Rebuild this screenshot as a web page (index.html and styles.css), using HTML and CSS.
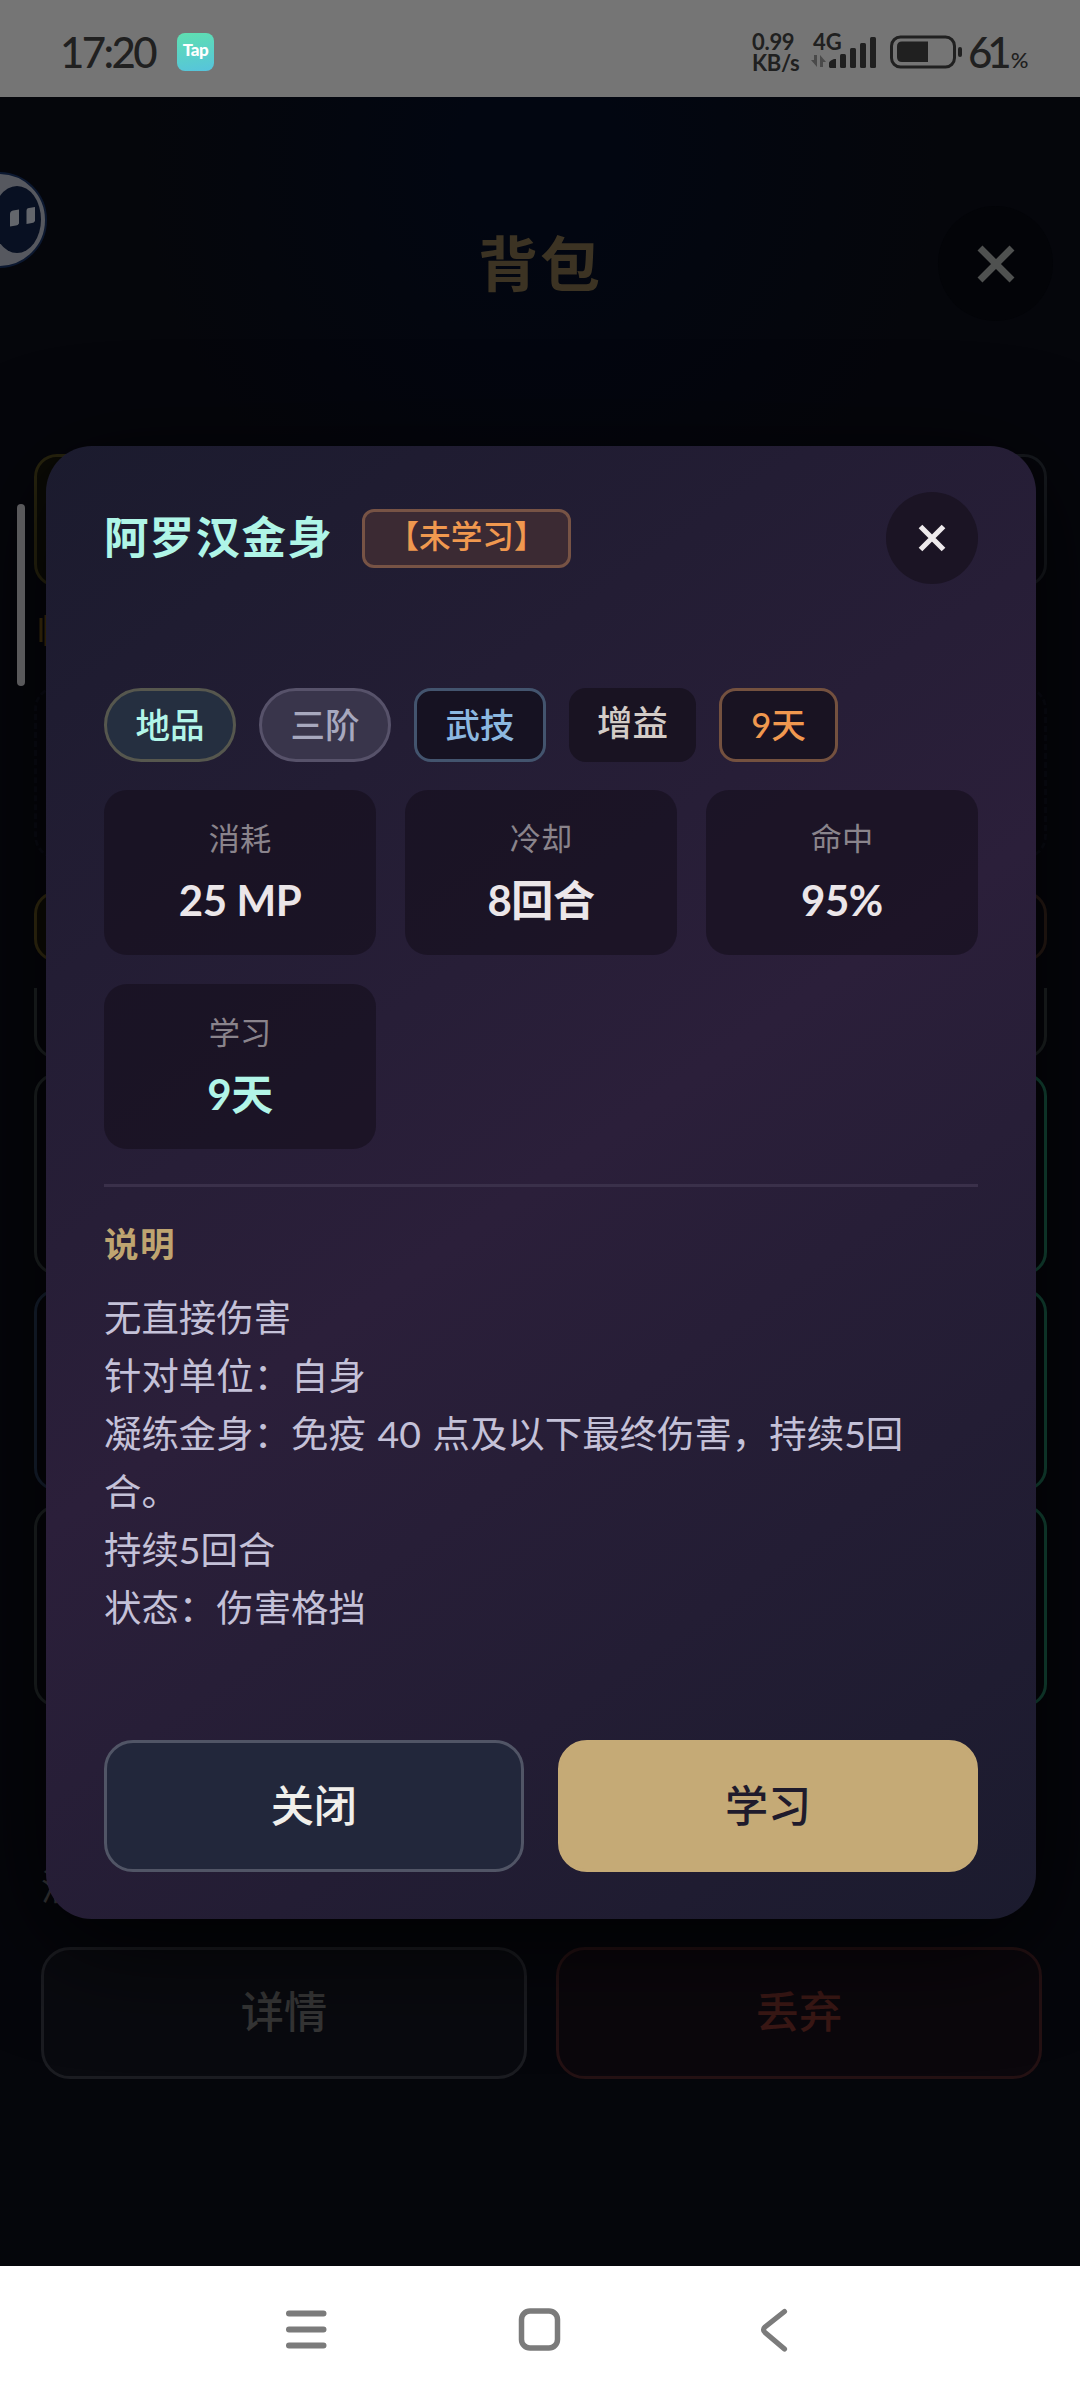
FILE: index.html
```html
<!DOCTYPE html>
<html lang="zh-CN">
<head>
<meta charset="utf-8">
<title>背包</title>
<link rel="stylesheet" href="styles.css">
</head>
<body>
<header class="status">
  <span class="clock">17:20</span>
  <span class="tap">Tap</span>
  <span class="speed"><span>0.99</span><span>KB/s</span></span>
  <span class="cell">
    <span class="cell-type">4G</span>
    <svg class="cell-bars" width="66" height="32" viewBox="0 0 66 32">
      <g fill="#4a4a4a"><path d="M0 24h3V19h3v12z"/><path d="M9 31V19l6 7h-3v5z"/></g>
      <g fill="#202020"><path d="M18 31v-4q0-2 5-4h2v9h-6z"/><rect x="29" y="18" width="6" height="14" rx="1.5"/><rect x="39" y="12" width="6" height="20" rx="1.5"/><rect x="49" y="7" width="6" height="25" rx="1.5"/><rect x="59" y="1" width="6" height="31" rx="1.5"/></g>
    </svg>
  </span>
  <svg class="battery" width="74" height="34" viewBox="0 0 74 34">
    <rect x="1.5" y="2" width="63" height="30" rx="9" fill="none" stroke="#202020" stroke-width="3"/>
    <path d="M12 6.500h26v20.500H12q-5 0-5-5V11.500q0-5 5-5z" fill="#202020"/>
    <rect x="68" y="12" width="4" height="10" rx="2" fill="#202020"/>
  </svg>
  <span class="percent">61<small>%</small></span>
</header>

<div class="app">
  <div class="page-head">
    <h1>背包</h1>
    <span class="page-close"><svg width="38" height="38" viewBox="0 0 38 38"><path d="M3 3L35 35M35 3L3 35" stroke="#4f5150" stroke-width="7"/></svg></span>
  </div>
  <div class="page-body">
    <div class="tabs"><div class="tab tab-on"></div><div class="tab"></div></div>
    <svg class="section-mark" width="12" height="31" viewBox="0 0 12 31"><path d="M5 3v24M10 0v31" stroke="#43310c" stroke-width="3"/></svg>
    <div class="slot"></div>
    <div class="filters"><div class="filter filter-on"></div><div class="filter"></div></div>
    <div class="list">
      <div class="card"></div><div class="card"></div>
      <div class="card"></div><div class="card green"></div>
      <div class="card blue"></div><div class="card green"></div>
      <div class="card"></div><div class="card green"></div>
    </div>
    <p class="note">消</p>
    <div class="page-actions">
      <div class="ghost">详情</div>
      <div class="ghost danger">丢弃</div>
    </div>
  </div>

  <svg class="ball" width="48" height="98" viewBox="0 0 48 98">
    <circle cx="-1" cy="49" r="47" fill="#56585f" stroke="#0c1830" stroke-width="2"/>
    <ellipse cx="17" cy="48.500" rx="24" ry="33.500" fill="#081022"/>
    <path d="M13 39.500l6-1v14q-1 2-3 2l-6 1V43q0-3 3-3.500zM29 37l6-1v14q-1 2-3 2l-5.500 1V40q0-3 2.500-3z" fill="#63666c"/>
  </svg>
  <div class="edge-handle"></div>

  <section class="modal">
    <div class="modal-head">
      <h2>阿罗汉金身</h2>
      <span class="badge">【未学习】</span>
      <span class="modal-close"><svg width="28" height="28" viewBox="0 0 28 28"><path d="M2.500 2.500L25.500 25.500M25.500 2.500L2.500 25.500" stroke="#eeeaec" stroke-width="5.200"/></svg></span>
    </div>
    <div class="tags">
      <span class="tag pill grade">地品</span>
      <span class="tag pill tier">三阶</span>
      <span class="tag kind">武技</span>
      <span class="tag plain">增益</span>
      <span class="tag days">9天</span>
    </div>
    <div class="stats">
      <div class="stat"><span>消耗</span><b>25 MP</b></div>
      <div class="stat"><span>冷却</span><b>8回合</b></div>
      <div class="stat"><span>命中</span><b>95%</b></div>
      <div class="stat"><span>学习</span><b class="mint">9天</b></div>
    </div>
    <div class="desc">
      <h3>说明</h3>
      <p>无直接伤害<br>针对单位：自身<br>凝练金身：免疫 40 点及以下最终伤害，持续5回合。<br>持续5回合<br>状态：伤害格挡</p>
    </div>
    <div class="modal-actions">
      <button class="btn">关闭</button>
      <button class="btn primary">学习</button>
    </div>
  </section>
</div>

<nav class="nav">
  <svg width="1080" height="135" viewBox="0 0 1080 135" fill="none" stroke="#7b7b7b" stroke-linecap="round" stroke-linejoin="round">
    <path d="M289 47.500H323.500M289 63.500H323.500M289 79.500H323.500" stroke-width="6"/>
    <rect x="521.500" y="45" width="36" height="37" rx="8.500" stroke-width="5.500"/>
    <path d="M784.500 45.500L765 61Q762 63.700 765 66.400L784.500 83" stroke-width="5.200"/>
  </svg>
</nav>
</body>
</html>
```
FILE: styles.css
```css
* { box-sizing: border-box; }
body {
  margin: 0;
  width: 1080px;
  height: 2401px;
  display: flex;
  flex-direction: column;
  overflow: hidden;
  background: #05060b;
  font-family: Lato, "Noto Sans CJK SC", sans-serif;
}
h1, h2, h3, p { margin: 0; }

/* status bar */
.status {
  height: 97px;
  flex: none;
  display: flex;
  align-items: center;
  padding: 7px 0 0 60px;
  background: #757575;
  color: #202020;
}
.status > * { flex: none; }
.clock { width: 117px; font-size: 42px; font-weight: 500; letter-spacing: -2.600px; white-space: nowrap; }
.tap {
  width: 37px;
  height: 38px;
  border-radius: 8px;
  background: linear-gradient(170deg, #5fe0b0, #56c3dd);
  color: #fff;
  font-size: 17px;
  font-weight: 900;
  line-height: 34px;
  letter-spacing: -.5px;
  text-align: center;
}
.speed {
  margin-left: 538px;
  width: 59px;
  display: flex;
  flex-direction: column;
  font-size: 22px;
  font-weight: 700;
  line-height: 21px;
  letter-spacing: -.3px;
}
.cell { position: relative; width: 79px; height: 40px; display: flex; align-items: flex-end; }
.cell-bars { margin-bottom: 4px; }
.cell-type { position: absolute; left: 2px; top: -1px; font-size: 22px; font-weight: 700; line-height: 22px; }
.percent { margin-left: 4px; font-size: 42px; font-weight: 500; letter-spacing: -5px; white-space: nowrap; }
.percent small { margin-left: 4px; font-size: 22px; letter-spacing: 0; }

/* inventory page, dimmed */
.app {
  position: relative;
  flex: 1;
  background: radial-gradient(ellipse 400px 420px at 540px 60px, #020611 20%, #05060b);
}
.page-head {
  height: 333px;
  display: grid;
  grid-template-columns: 1fr auto 1fr;
  align-items: center;
  padding: 0 27px;
}
h1 { grid-column: 2; font-size: 60px; font-weight: 700; line-height: 80px; letter-spacing: 2px; color: #3c3323; }
.page-close {
  justify-self: end;
  width: 115px;
  height: 115px;
  border-radius: 50%;
  background: #030408;
  display: grid;
  place-items: center;
}
.page-body { padding: 24px 33px 0 34px; display: flex; flex-direction: column; }
.tabs, .filters { display: grid; grid-template-columns: 1fr 1fr; gap: 23px; }
.tab { height: 133px; border: 3px solid #171a1f; border-radius: 23px; }
.tab-on { border-color: #2a260f; background: #0b0b06; }
.section-mark { margin: 28px 0 0 2px; }
.slot { margin-top: 40px; height: 173px; border: 3px dashed #0a0b14; border-radius: 23px; }
.filters { margin-top: 32px; }
.filter { height: 71px; border: 3px solid #2a1c16; border-radius: 23px; }
.filter-on { border-color: #382f12; background: #0e0c06; }
.list {
  margin-top: 26px;
  height: 749px;
  overflow: hidden;
  display: grid;
  grid-template-columns: 1fr 1fr;
  grid-auto-rows: 201.600px;
  gap: 14.400px;
  align-content: end;
  padding-bottom: 30px;
}
.card { border: 3px solid #1f2425; border-radius: 23px; }
.card.green { border-color: #154d3b; }
.card.blue { border-color: #182334; }
.note { margin: 128px 0 0 7px; font-size: 35px; line-height: 42px; color: #3a3a3c; }
.page-actions { margin: 40px 5px 0 7px; display: grid; grid-template-columns: 1fr 1fr; gap: 29px; }
.ghost {
  height: 132px;
  border: 3px solid #1b1c21;
  border-radius: 29px;
  background: #090a0f;
  color: #363636;
  font-size: 43.200px;
  font-weight: 500;
  line-height: 123px;
  text-align: center;
}
.danger { border-color: #241113; background: #0b070c; color: #3b1815; }

/* floating helpers */
.ball { position: absolute; left: 0; top: 74px; }
.edge-handle { position: absolute; left: 17px; top: 407px; width: 8px; height: 182px; border-radius: 4px; background: #59595b; z-index: 2; }

/* skill dialog */
.modal {
  position: absolute;
  left: 46px;
  top: 349px;
  width: 990px;
  height: 1473px;
  padding: 46px 58px;
  border-radius: 46px;
  background: linear-gradient(145deg, #1b1b2e, #2b1f3a 50%, #1b1b2e);
  box-shadow: 0 24px 110px rgba(0, 0, 0, .8);
}
.modal-head { display: flex; align-items: center; height: 92px; }
h2 { margin: -2px 0 0 0; font-size: 44.500px; font-weight: 700; line-height: 60px; letter-spacing: 1.300px; color: #aff5e7; }
.badge {
  margin-left: 29px;
  width: 209px;
  height: 59px;
  border: 3px solid #775345;
  border-radius: 12px;
  background: #3b2a33;
  color: #f0984f;
  font-size: 31.680px;
  font-weight: 500;
  line-height: 49px;
  text-align: center;
}
.modal-close {
  margin-left: auto;
  width: 92px;
  height: 92px;
  border-radius: 50%;
  background: #1b1424;
  display: grid;
  place-items: center;
}
.tags { margin-top: 104px; display: flex; gap: 23px; }
.tag {
  width: 132px;
  height: 74px;
  border: 3px solid transparent;
  border-radius: 17px;
  font-size: 34.560px;
  font-weight: 500;
  line-height: 68px;
  text-align: center;
}
.pill { border-radius: 37px; }
.grade { background: #252f40; border-color: #56574e; color: #b2f5e8; }
.tier { background: #39354b; border-color: #57526a; color: #a7a8be; }
.kind { background: #161222; border-color: #43546e; color: #8cb8e0; }
.plain { width: 127px; border: 0; background: #191322; color: #d3ccc7; line-height: 69px; font-size: 35.500px; }
.days { width: 119px; background: #191322; border-color: #74513f; color: #f0984f; }
.stats { margin-top: 28px; display: grid; grid-template-columns: repeat(3, 1fr); gap: 29px 28.800px; }
.stat {
  height: 165px;
  border-radius: 23px;
  background: rgba(20, 14, 26, .6);
  display: flex;
  flex-direction: column;
  align-items: center;
  padding-top: 26px;
}
.stat span { font-size: 31.200px; line-height: 44px; color: #8a848c; }
.stat b { margin-top: 10px; font-size: 42px; font-weight: 700; line-height: 60px; letter-spacing: -.4px; color: #ebe6e9; }
.stat .mint { color: #b2f5e8; }
.desc { margin-top: 35px; border-top: 3px solid #3a304a; }
h3 { margin-top: 33px; font-size: 34.560px; font-weight: 700; line-height: 48px; letter-spacing: 1.500px; color: #bfa470; }
.desc p { margin-top: 21px; padding-right: 29px; font-size: 37.440px; line-height: 58px; color: #c4c1d8; word-spacing: 2px; }
.modal-actions { margin-top: 103px; display: grid; grid-template-columns: 1fr 1fr; gap: 34.500px; }
.btn {
  height: 132px;
  padding: 0 0 2px;
  border: 3px solid #515566;
  border-radius: 29px;
  background: #22273b;
  color: #f0efeb;
  font: 500 43.200px/60px Lato, "Noto Sans CJK SC", sans-serif;
}
.primary { border-color: #c5aa76; background: #c5aa76; color: #1f1b2c; }

/* system navigation */
.nav { height: 135px; flex: none; background: #fff; }
.nav svg { display: block; }
```
